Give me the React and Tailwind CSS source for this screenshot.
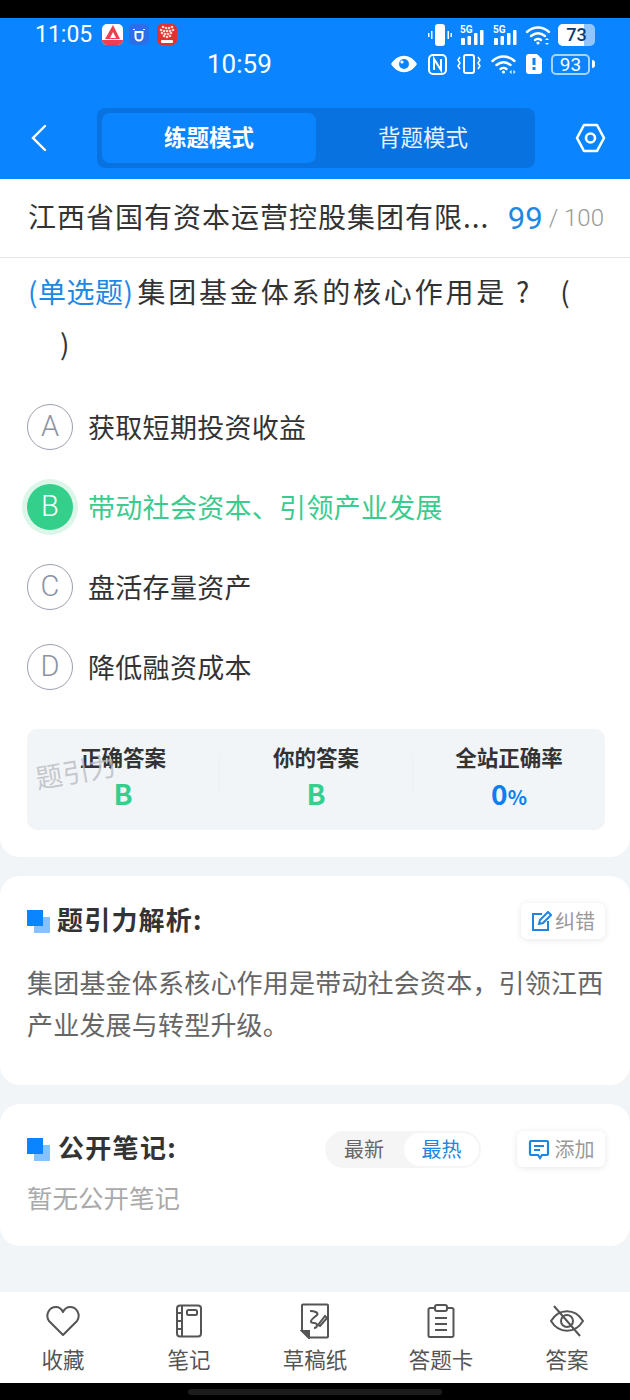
import React from 'react';

const options = [
  { key: 'A', text: '获取短期投资收益' },
  { key: 'B', text: '带动社会资本、引领产业发展', right: true },
  { key: 'C', text: '盘活存量资产' },
  { key: 'D', text: '降低融资成本' },
];

const heartDots = [
  [6, 3], [9, 4], [12, 4], [15, 3],
  [4, 6], [7, 7], [10, 7], [13, 7], [16, 6],
  [5, 9], [8, 10], [11, 10], [14, 9],
  [7, 12], [10, 13], [13, 12],
];

const Bars = () => (
  <svg width="26" height="22" viewBox="0 0 26 22" fill="white">
    <text x="1" y="8.500" fontSize="10" fontWeight="700" fontFamily="Roboto, sans-serif">5G</text>
    <rect x="2" y="14" width="4" height="7" rx="1" />
    <rect x="8.500" y="12" width="3.500" height="9" rx="1" />
    <rect x="15" y="9" width="3.500" height="12" rx="1" />
    <rect x="21" y="6" width="3.500" height="15" rx="1" />
  </svg>
);

const Wifi = ({ w = 26, h = 20, children }) => (
  <svg width={w} height={h} viewBox="0 0 26 20" fill="none" stroke="white" strokeWidth="2.400" strokeLinecap="round">
    <path d="M2 7c6.500-6 15.500-6 22 0" />
    <path d="M6 11c4.500-3.600 9.500-3.600 14 0" />
    <path d="M10 15c2-1.500 4-1.500 6 0" />
    <circle cx="13" cy="18" r="1.600" fill="white" stroke="none" />
    {children}
  </svg>
);

const SectionMark = () => (
  <span className="relative block w-[23px] h-[23px] shrink-0">
    <span className="absolute right-0 bottom-0 w-[16px] h-[16px] bg-[#86c2ff]" />
    <span className="absolute left-0 top-0 w-[16px] h-[16px] bg-[#0a84ff]" />
  </span>
);

const StatusBars = () => (
  <div className="h-[90px] font-['Roboto',sans-serif]">
    <div className="flex items-center h-[33px] pl-[35px] pr-[35px]">
      <span className="text-[23px] text-white leading-none">11:05</span>
      <span className="ml-[10px] w-[21px] h-[21px] rounded-[5px] bg-white overflow-hidden flex flex-col items-center">
        <svg width="21" height="16" viewBox="0 0 21 16"><path d="M11 1L3 15h15z" fill="#ef3e4f" /><path d="M11 8l-3 6h6z" fill="#fff" /></svg>
        <span className="w-full h-[5px] bg-[#ef3e4f]" />
      </span>
      <span className="ml-[6px] w-[20px] h-[21px] rounded-[5px] bg-[#2a6fe8] flex items-center justify-center">
        <svg width="12" height="14" viewBox="0 0 12 14" fill="none" stroke="white" strokeWidth="2"><path d="M1 1v1M11 1v1M2.500 4v5a3.500 3.500 0 0 0 7 0V4z" /></svg>
      </span>
      <span className="ml-[8px] w-[20px] h-[21px] rounded-[5px] bg-[#e3312d] overflow-hidden flex flex-col items-center">
        <svg width="20" height="16" viewBox="0 0 20 16" fill="#f9d5cd">
          {heartDots.map(([cx, cy]) => <circle key={`${cx}-${cy}`} cx={cx} cy={cy} r="1.300" />)}
        </svg>
        <span className="w-[12px] h-[3px] bg-white rounded-[1px]" />
      </span>
      <div className="ml-auto flex items-center gap-[7px]">
        <svg width="24" height="22" viewBox="0 0 24 22" fill="white"><rect x="7" y="0" width="10" height="22" rx="3" /><rect x="3" y="7" width="1.500" height="8" /><rect x="0" y="9" width="1.500" height="4" /><rect x="19.500" y="7" width="1.500" height="8" /><rect x="22.500" y="9" width="1.500" height="4" /></svg>
        <Bars />
        <Bars />
        <Wifi>
          <path d="M22 13l-2 2h4zM22 20l-2-2h4z" fill="white" stroke="none" />
        </Wifi>
        <span className="relative w-[37px] h-[22px] rounded-[5px] bg-[#8fc6ff] overflow-hidden">
          <span className="absolute left-0 top-0 bottom-0 w-[26px] bg-white" />
          <span className="absolute inset-0 flex items-center justify-center text-[18px] font-medium text-[#0a3a70] leading-none">73</span>
        </span>
      </div>
    </div>
    <div className="flex items-center h-[26px] pl-[207px] pr-[35px]">
      <span className="text-[26px] text-white leading-none">10:59</span>
      <div className="ml-auto flex items-center">
        <svg width="28" height="20" viewBox="0 0 28 20"><path d="M1 10c7-11 19-11 26 0-7 11-19 11-26 0z" fill="white" /><circle cx="14" cy="10" r="5" fill="#0a84ff" /><circle cx="12" cy="8" r="1.600" fill="white" /></svg>
        <svg className="ml-[10px]" width="19" height="21" viewBox="0 0 19 21" fill="none" stroke="white" strokeWidth="2"><rect x="1" y="1" width="17" height="19" rx="4" /><path d="M6 16V5l7 11V5" /></svg>
        <svg className="ml-[9px]" width="26" height="20" viewBox="0 0 26 20" fill="none" stroke="white" strokeWidth="2"><rect x="8" y="1" width="10" height="18" rx="2" /><path d="M4 3L2 6l2 3-2 3 2 3M22 3l2 3-2 3 2 3-2 3" strokeWidth="1.500" /></svg>
        <span className="ml-[8px] flex">
          <Wifi w={27} h={20}>
            <path d="M19 18l2-2v4zM25 18l-2-2v4z" fill="white" stroke="none" />
          </Wifi>
        </span>
        <svg className="ml-[9px]" width="16" height="20" viewBox="0 0 16 20"><path d="M3 0h8l5 5v12a3 3 0 0 1-3 3H3a3 3 0 0 1-3-3V3a3 3 0 0 1 3-3z" fill="white" /><rect x="6.500" y="4" width="3" height="7" fill="#0a84ff" /><rect x="6.500" y="13" width="3" height="3" fill="#0a84ff" /></svg>
        <span className="ml-[9px] flex items-center">
          <span className="w-[39px] h-[21px] rounded-[5px] border-2 border-[#a8d3ff] text-white text-[19px] leading-none flex items-center justify-center">93</span>
          <span className="ml-[2px] w-[3px] h-[8px] bg-white rounded-r" />
        </span>
      </div>
    </div>
  </div>
);

const NavIcon = ({ label, children }) => (
  <div className="w-[126px] flex flex-col items-center">
    <span className="h-[40px] flex items-center">{children}</span>
    <span className="mt-[4px] text-[21.500px] leading-[28px] text-[#555]">{label}</span>
  </div>
);

const AnswerStat = ({ label, children }) => (
  <div className="flex-1 flex flex-col items-center">
    <span className="text-[21.500px] leading-[28px] font-bold text-[#333]">{label}</span>
    {children}
  </div>
);

const App = () => {
  return (
    <div className="w-[630px] h-[1400px] bg-[#f2f5f8] flex flex-col overflow-hidden font-['Noto_Sans_CJK_SC','Noto_Sans',sans-serif]">
      <div className="h-[18px] bg-black shrink-0" />
      <header className="bg-[#0a84ff] h-[161px] shrink-0">
        <StatusBars />
        <div className="flex items-center h-[60px] pl-[30px] pr-[24px]">
          <svg width="18" height="28" viewBox="0 0 18 28" fill="none" stroke="white" strokeWidth="2.400" strokeLinecap="round"><path d="M15 2L3 14l12 12" /></svg>
          <div className="ml-[49px] w-[438px] h-[60px] rounded-[8px] bg-[#0873e0] p-[5px] flex">
            <div className="w-[214px] pb-[2px] rounded-[8px] bg-[#0a84ff] flex items-center justify-center text-white font-bold text-[22.500px]">练题模式</div>
            <div className="flex-1 pb-[2px] flex items-center justify-center text-[#e6f2ff] text-[22.500px]">背题模式</div>
          </div>
          <svg className="ml-auto" width="31" height="30" viewBox="0 0 31 30" fill="none" stroke="white" strokeWidth="2.600" strokeLinejoin="round"><path d="M9 2h13l7 13-7 13H9L2 15z" /><circle cx="15.500" cy="15" r="4.500" /></svg>
        </div>
      </header>

      <section className="bg-white rounded-b-[20px] pb-[27px] shrink-0">
        <div className="h-[79px] flex items-center pl-[28px] pr-[26px] border-b border-[#e5e5e5]">
          <span className="pb-[4px] text-[28px] text-[#333] tracking-[1px] whitespace-nowrap">江西省国有资本运营控股集团有限...</span>
          <span className="ml-auto font-['Roboto',sans-serif] text-[31px] text-[#1e88e5] leading-none">99</span>
          <span className="ml-[6px] font-['Roboto',sans-serif] font-light text-[24px] text-[#999] leading-none">/ 100</span>
        </div>
        <div className="pl-[28px] pt-[7px] text-[28px] leading-[52px] text-[#333] whitespace-nowrap">
          <span className="text-[#1e88e5] tracking-[0.500px]">(单选题)</span>
          <span className="ml-[4px] tracking-[2.800px]">集团基金体系的核心作用是</span>
          <span className="ml-[9px]">?</span>
          <span className="ml-[31px]">(</span>
          <div className="pl-[32px]">)</div>
        </div>
        <div className="mt-[18px] px-[27px] flex flex-col">
          {options.map((o) => (
            <div key={o.key} className="h-[80px] flex items-center">
              {o.right ? (
                <span className="font-['Roboto',sans-serif] font-light w-[46px] h-[46px] rounded-full bg-[#34cf8b] text-white text-[29px] flex items-center justify-center shadow-[0_0_0_5px_#dcf6ea]">{o.key}</span>
              ) : (
                <span className="font-['Roboto',sans-serif] font-light w-[46px] h-[46px] rounded-full border-[1.500px] border-[#9a9fb0] text-[#8d92a3] text-[29px] flex items-center justify-center">{o.key}</span>
              )}
              <span className={`ml-[15px] text-[27px] tracking-[0.3px] ${o.right ? 'text-[#3ccb8e]' : 'text-[#333]'}`}>{o.text}</span>
            </div>
          ))}
        </div>
        <div className="relative ml-[27px] mr-[25px] mt-[22px] h-[101px] rounded-[10px] bg-[#f2f5f8] flex pt-[14px]">
          <AnswerStat label="正确答案">
            <span className="mt-[5px] text-[28px] leading-[34px] font-bold text-[#34cf8b]">B</span>
          </AnswerStat>
          <div className="w-px h-[40px] mt-[10px] bg-[#eceff3]" />
          <AnswerStat label="你的答案">
            <span className="mt-[5px] text-[28px] leading-[34px] font-bold text-[#34cf8b]">B</span>
          </AnswerStat>
          <div className="w-px h-[40px] mt-[10px] bg-[#eceff3]" />
          <AnswerStat label="全站正确率">
            <span className="mt-[5px] text-[28px] leading-[34px] font-bold text-[#0a7fef]">0<span className="text-[20px]">%</span></span>
          </AnswerStat>
          <span className="absolute left-[8px] top-[28px] -rotate-[10deg] text-[27px] leading-none text-[#b8bcc2]/80">题引力</span>
        </div>
      </section>

      <section className="bg-white rounded-[20px] mt-[19px] h-[209px] pl-[27px] pr-[25px] pt-[27px] shrink-0">
        <div className="flex items-center h-[36px]">
          <SectionMark />
          <h2 className="ml-[7px] pb-[5px] text-[26px] tracking-[1.200px] font-bold text-[#333]">题引力解析:</h2>
          <button className="ml-auto w-[84px] h-[36px] rounded-[6px] bg-white shadow-[0_1px_6px_rgba(0,0,0,0.1)] flex items-center justify-center gap-[3px] text-[20px] text-[#999]">
            <svg width="21" height="21" viewBox="0 0 21 21" fill="none" stroke="#1c86e0" strokeWidth="2"><path d="M11 3H2v16h15v-9" /><path d="M8 13l1-4 8-8 3 3-8 8z" /></svg>
            纠错
          </button>
        </div>
        <p className="mt-[22px] text-[26px] leading-[42px] text-[#666] tracking-[0.200px]">集团基金体系核心作用是带动社会资本，引领江西产业发展与转型升级。</p>
      </section>

      <section className="bg-white rounded-[20px] mt-[19px] h-[142px] pl-[27px] pr-[25px] pt-[27px] shrink-0">
        <div className="flex items-center h-[36px]">
          <SectionMark />
          <h2 className="ml-[8px] pb-[5px] text-[26px] tracking-[1.300px] font-bold text-[#333]">公开笔记:</h2>
          <div className="ml-auto w-[156px] h-[37px] rounded-full bg-[#f5f5f5] flex items-center pl-[19px] pr-[2px] text-[20px]">
            <span className="text-[#666]">最新</span>
            <span className="ml-auto w-[75px] h-[33px] rounded-full bg-white text-[#1c86e0] flex items-center justify-center">最热</span>
          </div>
          <button className="ml-[36px] w-[88px] h-[36px] rounded-[6px] bg-white shadow-[0_1px_6px_rgba(0,0,0,0.1)] flex items-center justify-center gap-[5px] text-[20px] text-[#999]">
            <svg width="22" height="21" viewBox="0 0 22 21" fill="none" stroke="#1c86e0" strokeWidth="2.200"><path d="M3 2h16a1 1 0 0 1 1 1v12a1 1 0 0 1-1 1h-5l-2 3-2-3H3a1 1 0 0 1-1-1V3a1 1 0 0 1 1-1z" /><path d="M6 7h10M6 11h6" /></svg>
            添加
          </button>
        </div>
        <p className="mt-[12px] text-[25.500px] leading-[36px] text-[#aaa]">暂无公开笔记</p>
      </section>

      <div className="flex-1" />

      <nav className="h-[91px] bg-white flex pt-[9px] shrink-0">
        <NavIcon label="收藏">
          <svg width="36" height="34" viewBox="0 0 36 34" fill="none" stroke="#555" strokeWidth="2" strokeLinejoin="round"><path d="M18 31L4 17C0 11 4 3 11 3c3 0 5.500 2 7 5 1.500-3 4-5 7-5 7 0 11 8 7 14z" /></svg>
        </NavIcon>
        <NavIcon label="笔记">
          <svg width="28" height="34" viewBox="0 0 28 34" fill="none" stroke="#555" strokeWidth="2"><rect x="2" y="1.500" width="24" height="31" rx="3" /><path d="M7 1.500v31M2 9h5M2 17h5M2 25h5" /><rect x="12" y="6" width="10" height="5" rx="1.500" /></svg>
        </NavIcon>
        <NavIcon label="草稿纸">
          <svg width="30" height="36" viewBox="0 0 30 36" fill="none" stroke="#555" strokeWidth="2"><path d="M3 1.500h24a1 1 0 0 1 1 1v31a1 1 0 0 1-1 1H9l-7-7V2.500a1 1 0 0 1 1-1z" /><path d="M2 28h7v7z" fill="#555" /><path d="M10 8c5 0 9 2 7 4s-7 5-6 7 6 0 6 3-2 3-3 3" /><path d="M18 22l7-9 2 2-7 8z" /></svg>
        </NavIcon>
        <NavIcon label="答题卡">
          <svg width="28" height="34" viewBox="0 0 28 34" fill="none" stroke="#555" strokeWidth="2"><path d="M8 4H3a1.500 1.500 0 0 0-1.500 1.500v26A1.500 1.500 0 0 0 3 33h22a1.500 1.500 0 0 0 1.500-1.500v-26A1.500 1.500 0 0 0 25 4h-5" /><rect x="8" y="1" width="12" height="6" rx="2" /><path d="M8 14h12M8 20h12M8 26h12" /></svg>
        </NavIcon>
        <NavIcon label="答案">
          <svg width="36" height="32" viewBox="0 0 36 32" fill="none" stroke="#555" strokeWidth="2"><path d="M2 16c8-13 24-13 32 0-8 13-24 13-32 0z" /><circle cx="18" cy="16" r="6" /><path d="M5 1l26 30" /></svg>
        </NavIcon>
      </nav>

      <div className="h-[17px] bg-black shrink-0 flex justify-center items-center">
        <span className="w-[254px] h-[6px] rounded-full bg-[#1c1c1c]" />
      </div>
    </div>
  );
};

export default App;
